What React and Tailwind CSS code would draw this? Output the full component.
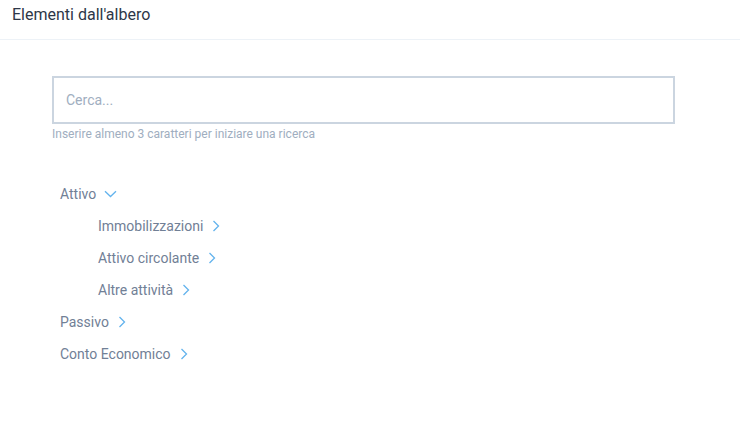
import React from "react";

const Right = () => (
  <svg width="8" height="12" viewBox="0 0 8 12" fill="none" className="ml-[9px]">
    <path d="M1.5 1 L6.5 6 L1.5 11" stroke="#63b3ed" strokeWidth="1.3" />
  </svg>
);
const Down = () => (
  <svg width="13" height="8" viewBox="0 0 13 8" fill="none" className="ml-[8px]">
    <path d="M1 1.2 L6.5 6.5 L12 1.2" stroke="#63b3ed" strokeWidth="1.3" />
  </svg>
);

const Row = ({ label, indent, open }) => (
  <div className={`flex items-center h-8 ${indent ? "pl-[46px]" : "pl-2"}`}>
    <span>{label}</span>
    {open ? <Down /> : <Right />}
  </div>
);

export default function App() {
  return (
    <div className="w-[740px] h-[432px] bg-white text-[14px]" style={{ fontFamily: "Roboto, 'Liberation Sans', sans-serif" }}>
      <div className="h-10 border-b border-[#edf2f7] pl-3 pt-[3px]">
        <div className="text-[#2d3748] leading-6 text-[16px]">Elementi dall'albero</div>
      </div>
      <div className="pl-[52px] pt-9">
        <div className="w-[623px] h-[48px] border-2 border-[#cbd5e0] flex items-center pl-3 text-[#a0aec0]">Cerca...</div>
        <div className="text-[12px] text-[#a0aec0] leading-4 mt-[2px]">Inserire almeno 3 caratteri per iniziare una ricerca</div>
        <div className="mt-[36px] text-[#718096]">
          <Row label="Attivo" open />
          <Row label="Immobilizzazioni" indent />
          <Row label="Attivo circolante" indent />
          <Row label="Altre attività" indent />
          <Row label="Passivo" />
          <Row label="Conto Economico" />
        </div>
      </div>
    </div>
  );
}
